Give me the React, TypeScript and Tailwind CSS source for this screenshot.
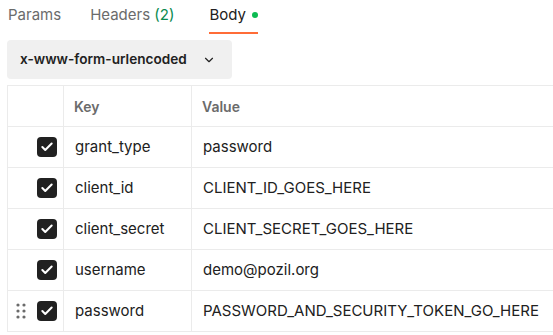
import { Check, ChevronDown } from 'lucide-react';

const rows = [
  { key: 'grant_type', value: 'password' },
  { key: 'client_id', value: 'CLIENT_ID_GOES_HERE' },
  { key: 'client_secret', value: 'CLIENT_SECRET_GOES_HERE' },
  { key: 'username', value: 'demo@pozil.org' },
  { key: 'password', value: 'PASSWORD_AND_SECURITY_TOKEN_GO_HERE', drag: true },
];

function DragHandle() {
  return (
    <svg width="10" height="16" viewBox="0 0 10 16" className="text-[#6b6b6b]">
      {[2, 8, 14].map(y => (
        <g key={y}>
          <circle cx="2" cy={y} r="1.6" fill="currentColor" />
          <circle cx="8" cy={y} r="1.6" fill="currentColor" />
        </g>
      ))}
    </svg>
  );
}

export default function App() {
  return (
    <div className="h-[335px] w-[553px] overflow-hidden bg-white font-['Inter',sans-serif] text-[14px] text-[#212121]">
      <div className="flex h-[34px] items-start pl-2 pt-[4px] text-[15px]">
        <div className="mr-[29px] text-[#6b6b6b]">Params</div>
        <div className="mr-[35px] text-[#6b6b6b]">
          Headers <span className="text-[#0a8a4f]">(2)</span>
        </div>
        <div className="flex h-[30px] items-start border-b-2 border-[#ff6c37]">
          <span>Body</span>
          <span className="ml-[6px] mt-[8px] h-[6px] w-[6px] rounded-full bg-[#0cbb52]" />
        </div>
      </div>

      <div className="ml-[7px] mt-[6px] flex h-[39px] w-[225px] items-center rounded-[4px] bg-[#f0f0f0] pl-[13px] pr-[16px]">
        <span className="text-[13.6px] font-semibold">x-www-form-urlencoded</span>
        <ChevronDown size={14} strokeWidth={2} className="ml-auto" />
      </div>

      <div className="ml-[7px] mt-[6px] w-[620px] border-l border-t border-[#ebebeb] text-[15px]">
        <div className="grid h-[41px] grid-cols-[56px_128px_1fr] border-b border-[#ebebeb] text-[14px] font-semibold text-[#6b6b6b]">
          <div className="border-r border-[#ebebeb]" />
          <div className="flex items-center border-r border-[#ebebeb] pl-[10px]">Key</div>
          <div className="flex items-center pl-[10px]">Value</div>
        </div>
        {rows.map(row => (
          <div
            key={row.key}
            className="grid h-[41px] grid-cols-[56px_128px_1fr] border-b border-[#ebebeb]"
          >
            <div className="flex items-center border-r border-[#ebebeb] pl-[8px]">
              <div className="w-[11px]">{row.drag && <DragHandle />}</div>
              <div className="ml-[10px] flex h-[20px] w-[20px] items-center justify-center rounded-[4px] bg-[#212121]">
                <Check size={14} strokeWidth={3.5} className="text-white" />
              </div>
            </div>
            <div className="flex items-center border-r border-[#ebebeb] pl-[11px]">{row.key}</div>
            <div className="flex items-center pl-[11px]">{row.value}</div>
          </div>
        ))}
      </div>
    </div>
  );
}
